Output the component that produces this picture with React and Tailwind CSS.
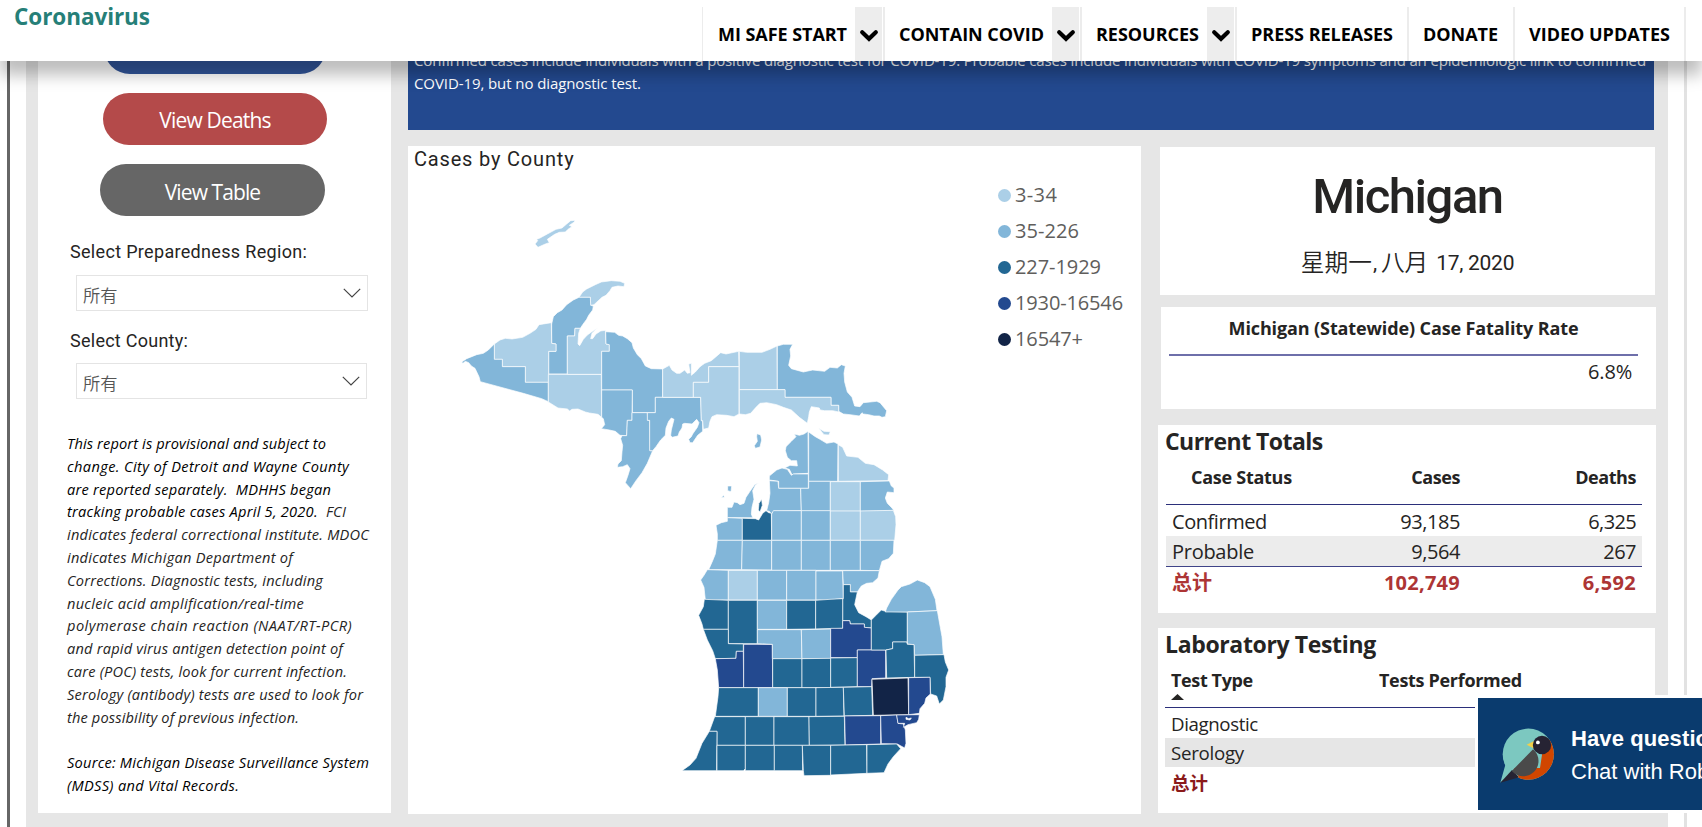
import { useLayoutEffect, useRef } from "react";

/* Single line of text whose tracking is adjusted so that it fills width w. */
function Fit({ w, className = "", children }) {
  const ref = useRef(null);
  useLayoutEffect(() => {
    const el = ref.current;
    const apply = () => {
      el.style.letterSpacing = "0px";
      const natural = el.getBoundingClientRect().width;
      const n = el.textContent.length;
      el.style.letterSpacing = (w - natural) / (n - 0.5) + "px";
    };
    apply();
    document.fonts.ready.then(apply);
  }, [w]);
  return (
    <span className="inline-block whitespace-pre">
      <span ref={ref} className={"inline-block whitespace-pre " + className}>
        {children}
      </span>
    </span>
  );
}

const DIN = "font-['Roboto','Noto_Sans_CJK_SC',sans-serif]";

const L = "#abcfe7";
const M = "#82b6d9";
const D = "#226793";
const B = "#23498f";
const N = "#122447";

/* County outlines, grouped by region; each group has its own origin. */
const REGIONS = [
  {
    origin: [440, 200],
    shapes: [
      [L, "285,132 293,122 290,118 300,114 322,102 348,88 366,84 380,72 392,62 405,61 403,66 388,76 396,80 384,88 376,96 358,97 344,103 322,118 328,128 316,132 294,142"],
      [L, "417,292 428,276 440,267 466,254 484,246 514,242 540,244 554,250 552,260 534,258 516,262 510,272 498,286 486,292 462,314 452,316 451,292"],
      [M, "417,292 451,292 452,316 460,318 458,330 446,346 440,358 428,374 421,385 405,385 404,408 382,408 382,522 326,522 326,454 348,454 348,432 335,430 335,372 340,350 352,338 366,330 380,314 400,300"],
      [L, "163,432 180,420 196,415 216,417 248,412 270,400 288,388 297,374 334,368 335,430 348,432 348,454 326,454 326,547 256,547 256,500 187,500 187,478 163,478"],
      [M, "65,486 80,476 110,464 130,460 145,450 163,432 163,478 187,478 187,500 256,500 256,547 325,547 325,605 305,596 250,580 121,545 117,530 105,505 94,498 86,488 76,484 69,490"],
      [L, "325,523 484,523 485,652 474,643 448,639 436,636 414,627 396,628 389,633 382,627 354,624 325,606"],
      [L, "382,408 404,408 405,385 421,385 416,400 414,432 419,437 430,418 442,405 460,392 476,382 468,388 456,400 452,416 458,416 468,402 482,393 496,391 498,432 508,434 508,454 485,454 485,523 382,523"],
      [M, "497,395 524,397 536,406 548,408 562,416 576,428 580,444 592,464 604,476 616,498 634,506 668,507 668,592 646,592 646,638 577,638 577,570 485,570 485,454 508,454 508,434 498,432"],
      [M, "485,570 577,570 576,661 562,661 560,707 540,706 526,694 508,690 484,686 494,674 490,656 485,652"],
      [M, "576,638 622,638 623,661 629,661 630,752 638,752 622,790 606,818 588,842 572,866 556,848 564,826 570,806 562,794 548,800 532,802 534,792 544,782 546,756 548,736 542,716 546,707 560,707 562,661 576,661"],
    ],
  },
  {
    origin: [650, 320],
    shapes: [
      [M, "16,232 152,232 154,302 158,303 158,334 143,346 128,368 120,368 116,358 124,350 128,342 142,322 147,308 140,298 126,312 104,310 98,312 96,324 88,336 84,348 66,352 62,346 64,330 72,298 64,294 56,304 48,324 46,346 32,360 18,380 8,392 -1,392 -1,301 -8,301 -8,278 16,278"],
      [L, "38,147 58,136 66,150 80,160 90,160 104,150 112,160 120,158 116,132 124,130 124,166 136,156 150,140 164,130 184,122 198,110 212,98 228,102 266,94 267,140 176,140 176,187 130,187 130,232 38,232"],
      [L, "176,140 267,140 267,282 252,290 230,286 200,284 186,290 180,304 176,324 160,328 158,302 154,302 152,232 130,232 130,187 176,187"],
      [L, "268,94 290,97 336,97 360,88 381,78 382,209 268,209"],
      [M, "382,78 400,73 428,73 420,88 422,108 416,136 424,146 460,156 488,150 524,154 540,142 562,144 574,134 586,138 582,160 584,186 592,216 606,232 614,258 630,260 640,248 680,244 690,248 710,272 706,290 696,292 688,288 672,288 656,284 640,282 636,278 628,288 600,284 580,282 566,274 566,256 543,256 543,232 405,232 405,209 382,209"],
      [L, "268,209 405,209 405,232 543,232 543,256 566,256 566,276 548,272 524,272 510,270 508,264 484,260 478,276 476,290 472,310 464,304 448,292 424,270 400,262 380,254 350,248 330,250 318,262 302,280 286,284 268,282"],
      [L, "506,325 522,334 541,335 537,345 522,344"],
      [M, "321,341 332,345 335,360 330,381 316,385 313,377 322,364 320,350"],
      [M, "432,342 448,346 462,342 474,334 475,460 432,462 426,464 418,448 404,444 420,436 442,438 440,422 424,422 412,412 406,392 408,380 424,364 438,350"],
      [M, "358,480 358,468 380,450 396,444 412,448 424,466 430,462 475,462 475,505 386,505 386,484"],
      [M, "476,336 496,350 510,358 530,370 552,366 564,372 563,484 476,484"],
      [L, "565,374 578,382 590,408 624,412 646,430 672,434 698,450 716,464 714,482 565,484"],
      [M, "358,482 384,484 386,505 452,505 454,572 372,573 364,582 358,574 350,572 356,548 360,520"],
      [M, "476,484 541,484 541,573 454,573 452,505 476,505"],
      [L, "541,485 631,485 631,574 541,574"],
      [M, "631,485 718,483 724,498 732,504 732,518 712,516 706,534 712,550 726,564 732,572 631,574"],
    ],
  },
  {
    origin: [680, 420],
    shapes: [
      [M, "142,262 156,262 162,246 172,248 180,254 192,250 198,232 210,214 224,194 236,188 226,196 218,212 222,238 216,262 214,282 218,293 142,293"],
      [M, "143,198 155,198 153,215 143,212"],
      [M, "124,233 131,225 133,232"],
      [D, "237,250 245,238 247,256 240,276 235,270"],
      [M, "142,293 187,295 187,361 112,361 112,342 108,316 124,308 142,304"],
      [D, "187,295 226,296 236,300 248,280 258,272 266,278 274,280 275,361 187,361"],
      [M, "280,272 364,272 364,361 275,361 275,282"],
      [M, "364,272 451,272 451,361 364,361"],
      [L, "451,273 541,273 541,361 451,361"],
      [L, "541,273 640,271 647,290 648,314 644,361 541,361"],
      [M, "112,361 187,361 185,449 86,449 98,422 106,402"],
      [M, "187,361 275,361 275,450 185,449"],
      [M, "275,361 364,361 364,451 275,451"],
      [M, "364,361 451,361 451,451 364,451"],
      [M, "451,361 541,361 541,451 451,451"],
      [M, "541,361 642,361 640,400 626,416 606,424 598,452 541,451"],
      [M, "82,449 145,451 145,540 76,540 72,502 62,480 72,466"],
      [L, "145,451 232,451 232,540 145,540"],
      [M, "232,451 320,451 320,540 232,540"],
      [M, "320,451 408,451 408,540 320,540"],
      [M, "408,453 488,453 490,535 454,540 408,540"],
      [M, "488,452 598,452 594,474 578,488 560,490 544,498 532,516 511,516 511,494 490,494"],
    ],
  },
  {
    origin: [670, 590],
    shapes: [
      [D, "520,-16 541,-16 541,6 562,6 554,44 566,68 588,80 604,90 604,114 583,112 583,102 541,102 539,92 518,92 518,26 520,26"],
      [D, "103,28 175,31 175,118 100,118 96,102 86,76 100,50"],
      [D, "175,31 262,31 262,161 175,161"],
      [M, "262,31 350,31 350,118 262,118"],
      [D, "350,31 437,31 437,117 350,118"],
      [D, "437,31 480,28 518,26 518,115 437,117"],
      [D, "100,118 175,118 175,161 220,162 220,184 199,184 198,205 136,206 128,182 112,150"],
      [B, "136,206 198,205 199,184 220,184 221,293 146,293 142,240"],
      [B, "221,163 307,163 308,293 221,293"],
      [M, "262,119 394,119 396,206 307,206 307,163 262,161"],
      [M, "394,119 482,117 482,206 396,206"],
      [B, "482,115 518,115 518,92 539,92 541,102 583,102 583,112 604,114 604,180 562,180 562,203 482,203"],
      [D, "308,206 396,206 396,293 308,293"],
      [D, "396,206 482,205 482,293 396,293"],
      [D, "482,204 562,203 562,290 482,292"],
      [B, "562,180 647,180 647,264 606,266 605,290 562,290"],
      [D, "604,90 618,76 634,60 646,64 712,66 712,156 668,156 668,176 647,180 604,180"],
      [M, "664,28 684,0 694,-10 720,-18 742,-30 764,-22 780,-10 796,28 801,62 712,66 646,66 650,54"],
      [M, "712,66 802,62 808,96 816,140 820,194 734,196 732,164 712,162"],
      [D, "668,156 710,156 712,163 732,164 734,262 650,264 648,180 668,176"],
      [D, "734,196 822,194 826,216 836,240 828,262 828,290 820,330 808,342 800,318 782,312 780,262 734,262"],
      [N, "606,268 714,264 716,374 610,376"],
      [B, "716,263 780,262 781,312 768,324 764,340 750,356 748,370 716,374"],
      [D, "146,293 265,293 265,379 136,379 144,320"],
      [M, "265,293 352,293 352,379 265,379"],
      [D, "352,293 438,293 438,379 352,379"],
      [D, "438,293 520,292 522,378 438,379"],
      [D, "520,292 605,290 608,376 523,378"],
      [D, "134,380 226,380 226,466 141,466 141,424 118,424"],
      [D, "226,380 312,380 312,466 226,466"],
      [D, "312,380 417,380 418,466 312,466"],
      [D, "417,380 523,379 525,465 418,466"],
      [B, "524,378 632,377 632,462 526,465"],
      [B, "632,377 680,375 684,400 700,402 706,420 708,460 704,474 682,462 634,461"],
      [B, "680,375 748,374 746,388 740,398 714,404 700,412 704,400 684,400"],
      ["#fff", "708,382 716,386 724,384 720,390 708,388"],
      [D, "118,424 141,424 140,542 36,542 60,525 78,505 96,460"],
      [D, "141,466 226,466 226,536 220,542 141,542"],
      [D, "226,466 313,466 313,542 226,542"],
      [D, "313,466 397,466 398,542 313,542"],
      [D, "397,466 482,466 482,556 402,557 400,542"],
      [D, "482,466 590,464 591,550 482,555"],
      [D, "591,464 680,462 692,476 670,500 654,522 642,548 591,550"],
    ],
  },
];

function CountyMap() {
  return (
    <svg className="absolute inset-0" width="733" height="668" viewBox="408 146 733 668">
      {REGIONS.map(({ origin: [x, y], shapes }) => (
        <g
          key={x}
          transform={`translate(${x} ${y}) scale(0.33333)`}
          stroke="#fff"
          strokeOpacity="0.75"
          strokeWidth="2.7"
          strokeLinejoin="round"
        >
          {shapes.map(([fill, points]) => (
            <polygon key={points} fill={fill} points={points} />
          ))}
        </g>
      ))}
    </svg>
  );
}

function NavLink({ label, w, className }) {
  return (
    <div className={"flex h-full items-start border-[#ececec] pt-[13px] text-[18px] leading-[28px] font-bold text-black " + className}>
      <Fit w={w}>{label}</Fit>
    </div>
  );
}

function NavToggle() {
  return (
    <div className="flex h-full w-[27px] shrink-0 justify-center bg-[#ededed] pt-[22px]">
      <svg width="20" height="14" viewBox="0 0 20 14" fill="none" stroke="#000" strokeWidth="4.2">
        <path d="M3.2 3.3 L10 9.8 L16.8 3.3" strokeLinecap="round" />
      </svg>
    </div>
  );
}

function Header() {
  return (
    <header className="relative z-10 flex h-[61px] shrink-0 bg-white shadow-[0_14px_15px_rgba(0,0,0,0.26)]">
      <div className="w-[702px] shrink-0 pl-[14px] text-[22.5px] leading-[33px] font-bold text-[#267f78]">
        <Fit w={136}>Coronavirus</Fit>
      </div>
      <nav className="mt-[7px] flex h-[54px]">
        <NavLink label="MI SAFE START" w={129} className="w-[153px] border-l-[1.5px] pl-[15px]" />
        <NavToggle />
        <NavLink label="CONTAIN COVID" w={145} className="ml-px w-[169px] border-l-2 pl-[14px]" />
        <NavToggle />
        <NavLink label="RESOURCES" w={103} className="ml-px w-[127px] border-l-2 pl-[14px]" />
        <NavToggle />
        <NavLink label="PRESS RELEASES" w={142} className="ml-px w-[172px] border-l-2 pl-[14px]" />
        <NavLink label="DONATE" w={75} className="w-[106px] border-l-2 pl-[14px]" />
        <NavLink label="VIDEO UPDATES" w={141} className="w-[173px] border-x-2 pl-[14px]" />
      </nav>
    </header>
  );
}

function Select({ className }) {
  return (
    <div className={"ml-[38px] flex h-[36px] shrink-0 items-center justify-between border border-[#e4e4e4] px-[6px] text-[#555] " + className}>
      <span className="pt-[4px] font-['Noto_Sans_CJK_SC',sans-serif] text-[17.3px] leading-[24px] font-[350]">所有</span>
      <svg width="18" height="10" viewBox="0 0 18 10" fill="none" stroke="#444" strokeWidth="1.2">
        <path d="M.8 .8 L9 9 L17.2 .8" />
      </svg>
    </div>
  );
}

const NOTES = [
  ["This report is provisional and subject to", 259],
  ["change. City of Detroit and Wayne County", 282],
  ["are reported separately.  MDHHS began", 264],
  [null],
  ["indicates federal correctional institute. MDOC", 302],
  ["indicates Michigan Department of", 226],
  ["Corrections. Diagnostic tests, including", 256],
  ["nucleic acid amplification/real-time", 237],
  ["polymerase chain reaction (NAAT/RT-PCR)", 285],
  ["and rapid virus antigen detection point of", 276],
  ["care (POC) tests, look for current infection.", 280],
  ["Serology (antibody) tests are used to look for", 296],
  ["the possibility of previous infection.", 232],
];

function Sidebar() {
  return (
    <aside className="flex h-[752px] w-[353px] shrink-0 flex-col overflow-hidden bg-white">
      <div className="-mt-[39px] ml-[66px] h-[52px] w-[222px] shrink-0 rounded-full bg-[#31559a]" />
      <button className="mt-[19px] ml-[65px] h-[52px] w-[224px] shrink-0 rounded-full bg-[#b44a4a] pt-[3px] text-[21px] text-white">
        <Fit w={112}>View Deaths</Fit>
      </button>
      <button className="mt-[19px] ml-[62px] h-[52px] w-[225px] shrink-0 rounded-full bg-[#666] pt-[5px] text-[21px] text-white">
        <Fit w={96}>View Table</Fit>
      </button>
      <div className={"mt-[24px] ml-[32px] text-[18px] leading-[24px] text-[#252423] " + DIN}>
        <Fit w={237}>Select Preparedness Region:</Fit>
      </div>
      <Select className="mt-[11px] w-[292px]" />
      <div className={"mt-[18px] ml-[32px] text-[18px] leading-[24px] text-[#252423] " + DIN}>
        <Fit w={118}>Select County:</Fit>
      </div>
      <Select className="mt-[10px] w-[291px]" />
      <div className="mt-[33px] ml-[29px] flex flex-col text-[14.6px] leading-[22.8px] text-[#252423] italic">
        {NOTES.map(([text, w], i) =>
          text ? (
            <div key={i} className={i < 3 ? "h-[22.8px] text-black" : "h-[22.8px]"}>
              <Fit w={w}>{text}</Fit>
            </div>
          ) : (
            <div key={i} className="h-[22.8px]">
              <Fit w={279}>
                <span className="text-black">tracking probable cases April 5, 2020.</span>
                {"  FCI"}
              </Fit>
            </div>
          )
        )}
        <div className="mt-[22.5px] h-[22.8px] text-black">
          <Fit w={302}>Source: Michigan Disease Surveillance System</Fit>
        </div>
        <div className="h-[22.8px] text-black">
          <Fit w={172}>(MDSS) and Vital Records.</Fit>
        </div>
      </div>
    </aside>
  );
}

const LEGEND = [
  ["3-34", 42, "bg-[#abcfe7]"],
  ["35-226", 64, "bg-[#82b6d9]"],
  ["227-1929", 86, "bg-[#226793]"],
  ["1930-16546", 108, "bg-[#23498f]"],
  ["16547+", 68, "bg-[#122447]"],
];

function MapCard() {
  return (
    <section className="relative flex h-[668px] w-[733px] shrink-0 items-start justify-between bg-white">
      <CountyMap />
      <h2 className={"pl-[6px] text-[20px] leading-[26px] text-[#252423] " + DIN}>
        <Fit w={160}>Cases by County</Fit>
      </h2>
      <ul className="mt-[31.5px] w-[143px]">
        {LEGEND.map(([label, w, dot]) => (
          <li key={label} className="flex h-[35.95px] items-center text-[20px] leading-[36px] text-[#605e5c]">
            <span className={"mt-px mr-[4px] size-[13px] rounded-full " + dot} />
            <Fit w={w}>{label}</Fit>
          </li>
        ))}
      </ul>
    </section>
  );
}

function StateCard() {
  return (
    <section className={"ml-[2px] flex h-[148px] w-[495px] flex-col items-center bg-white text-[#252423] " + DIN}>
      <h1 className="mt-[20px] text-[49px] leading-[60px] font-medium">
        <Fit w={191}>Michigan</Fit>
      </h1>
      <p className="mt-[21px] flex text-[21px] leading-[30px]">
        <span className="text-[23.7px] font-[350]">星期一</span>
        <span className="w-[9px] pl-[1px]">,</span>
        <span className="mr-[8px] text-[23.7px] font-[350]">八月</span>
        <Fit w={78}>17, 2020</Fit>
      </p>
    </section>
  );
}

function FatalityCard() {
  return (
    <section className="mt-[12px] ml-[3px] h-[102px] w-[495px] bg-white text-[#252423]">
      <div className="mr-[18px] ml-[8px] flex h-[49px] justify-center border-b-2 border-[#6e6faa] pt-[6px] text-[18px] leading-[30px] font-bold">
        <Fit w={350}>Michigan (Statewide) Case Fatality Rate</Fit>
      </div>
      <div className="flex justify-end pt-[1px] pr-[24px] text-[20px] leading-[30px]">
        <Fit w={44}>6.8%</Fit>
      </div>
    </section>
  );
}

function TotalsRow({ name, cases, deaths, className, nw, cw, dw }) {
  return (
    <div className={"flex h-[31px] items-start pl-[6px] " + className}>
      <div className="w-[187px]">{nw ? <Fit w={nw}>{name}</Fit> : name}</div>
      <div className="flex w-[101px] justify-end">
        <Fit w={cw}>{cases}</Fit>
      </div>
      <div className="flex w-[176px] justify-end">
        <Fit w={dw}>{deaths}</Fit>
      </div>
    </div>
  );
}

function TotalsCard() {
  return (
    <section className="mt-[16px] h-[188px] w-[498px] bg-white text-[#252423]">
      <h2 className="pt-px pl-[7px] text-[23px] leading-[30px] font-bold">
        <Fit w={158}>Current Totals</Fit>
      </h2>
      <div className="ml-[8px] w-[476px] text-[20px]">
        <div className="flex h-[49px] border-b border-[#2b2f7a] pt-[6px] text-[18px] leading-[30px] font-bold">
          <div className="w-[193px] pl-[25px]">
            <Fit w={101}>Case Status</Fit>
          </div>
          <div className="flex w-[101px] justify-end">
            <Fit w={49}>Cases</Fit>
          </div>
          <div className="flex w-[176px] justify-end">
            <Fit w={61}>Deaths</Fit>
          </div>
        </div>
        <TotalsRow name="Confirmed" cases="93,185" deaths="6,325" nw={95} cw={60} dw={48} className="leading-[33px]" />
        <TotalsRow name="Probable" cases="9,564" deaths="267" nw={82} cw={49} dw={33} className="border-b border-[#3f4388] bg-[#ececec] leading-[31px]" />
        <TotalsRow name="总计" cases="102,749" deaths="6,592" cw={76} dw={53} className="font-['Open_Sans','Noto_Sans_CJK_SC',sans-serif] leading-[32px] font-bold text-[#ad3535]" />
      </div>
    </section>
  );
}

function LabCard() {
  return (
    <section className="mt-[15px] h-[185px] w-[497px] bg-white text-[#252423]">
      <h2 className="pt-px pl-[7px] text-[23px] leading-[30px] font-bold">
        <Fit w={211}>Laboratory Testing</Fit>
      </h2>
      <div className="ml-[7px] w-[476px] text-[18.7px]">
        <div className="flex h-[49px] border-b border-[#2b2f7a] pt-[6px] text-[18px] leading-[30px] font-bold">
          <div className="flex w-[214px] flex-col pl-[6px]">
            <Fit w={82}>Test Type</Fit>
            <svg className="-mt-px" width="13" height="6" viewBox="0 0 13 6">
              <path d="M0 6 L6.5 0 L13 6Z" fill="#252423" />
            </svg>
          </div>
          <Fit w={143}>Tests Performed</Fit>
        </div>
        <div className="h-[30px] pl-[6px] leading-[31px]">
          <Fit w={87}>Diagnostic</Fit>
        </div>
        <div className="h-[29px] bg-[#e6e6e6] pl-[6px] leading-[29px]">
          <Fit w={73}>Serology</Fit>
        </div>
        <div className="pl-[6px] font-['Open_Sans','Noto_Sans_CJK_SC',sans-serif] text-[18.5px] leading-[31px] font-bold text-[#8b1a1a]">总计</div>
      </div>
    </section>
  );
}

function RobinLogo() {
  return (
    <svg className="shrink-0" width="56" height="56" viewBox="1499 727 56 56">
      <defs>
        <clipPath id="bubble">
          <circle cx="1528.3" cy="754.2" r="25.6" />
        </clipPath>
        <clipPath id="belly">
          <path d="M1500.3 782.7 L1533.3 749 L1542 745 L1550.5 739.5 H1560 V790 H1500Z" />
        </clipPath>
      </defs>
      <path d="M1502.9 757 Q1504 761 1505.3 765 L1500.3 782.7 L1520 766 Z" fill="#7cc8c0" />
      <circle cx="1528.3" cy="754.2" r="25.6" fill="#7cc8c0" />
      <path d="M1500.3 782.7 L1512 770 L1519 777.3 Z" fill="#262333" />
      <g clipPath="url(#belly)">
        <g clipPath="url(#bubble)">
          <path d="M1514 768 H1540 L1545 735 H1560 V790 H1518.5 V776.5 Z" fill="#d14600" />
        </g>
        <circle cx="1523.3" cy="761" r="15.2" fill="#4a4a4a" />
      </g>
      <path d="M1526.7 744.7 L1534 741 V748.5 Z" fill="#f2cf4a" />
      <circle cx="1542" cy="745" r="9.2" fill="#262333" />
      <circle cx="1537.9" cy="742.4" r="1.9" fill="#fff" />
    </svg>
  );
}

function ChatWidget() {
  return (
    <div className="absolute top-[695px] left-[1475px] z-20 w-[227px] overflow-hidden bg-white py-[3px] pl-[3px]">
      <div className="flex h-[112px] w-[320px] bg-[#0a3b6e] pt-[29px] pl-[21px] font-['Liberation_Sans',Arial,sans-serif] text-[22px] text-white">
        <RobinLogo />
        <div className="ml-[16px] whitespace-nowrap">
          <div className="-mt-[5px] leading-[34px] font-bold tracking-[0.1px]">Have questions?</div>
          <div className="leading-[32px]">Chat with Robin</div>
        </div>
      </div>
    </div>
  );
}

export default function App() {
  return (
    <div className="relative flex h-[827px] w-[1702px] flex-col overflow-hidden bg-white font-['Open_Sans','Noto_Sans',sans-serif]">
      <Header />
      <div className="flex h-[766px] pl-[7px]">
        <div className="w-[3px] bg-[#666]" />
        <main className="ml-[16px] flex w-[1642px] bg-[#e6e6e6] pl-[12px]">
          <Sidebar />
          <div className="ml-[17px] flex flex-col">
            <div className="h-[69px] w-[1246px] overflow-hidden bg-[#23498f] pl-[6px] text-[15px] leading-[23px] text-white">
              <div className="-mt-[12px] h-[23px]">
                <Fit w={1232}>
                  Confirmed cases include individuals with a positive diagnostic test for COVID-19. Probable cases include individuals with COVID-19 symptoms and an epidemiologic link to confirmed
                </Fit>
              </div>
              <Fit w={227}>COVID-19, but no diagnostic test.</Fit>
            </div>
            <div className="mt-[16px] flex">
              <MapCard />
              <div className="mt-px ml-[17px] flex flex-col">
                <StateCard />
                <FatalityCard />
                <TotalsCard />
                <LabCard />
              </div>
            </div>
          </div>
        </main>
        <div className="ml-[16px] w-[3px] bg-[#e2e2e2]" />
      </div>
      <ChatWidget />
    </div>
  );
}
